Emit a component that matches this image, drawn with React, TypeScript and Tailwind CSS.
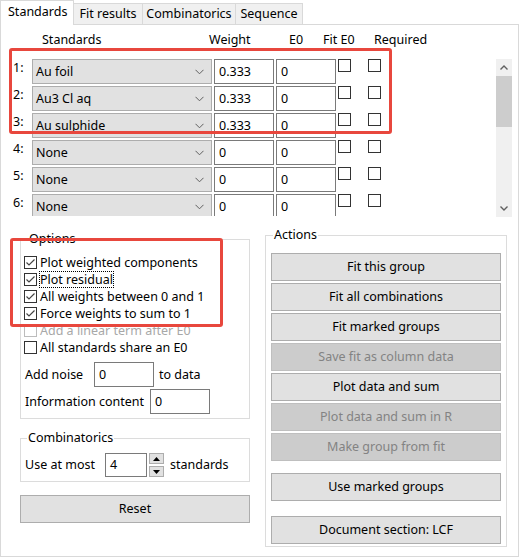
import React from "react";

function Box({ checked = false, disabled = false }: { checked?: boolean; disabled?: boolean }) {
  return (
    <div
      className={
        "w-[13px] h-[13px] shrink-0 border bg-white flex items-center justify-center " +
        (disabled ? "border-[#bcbcbc]" : "border-[#333333]")
      }
    >
      {checked && (
        <svg width="11" height="11" viewBox="0 0 11 11">
          <polyline points="1.5,5.5 4,8 9.5,2.5" fill="none" stroke="#444" strokeWidth="1.2" />
        </svg>
      )}
    </div>
  );
}

function Chevron() {
  return (
    <svg width="9" height="6" viewBox="0 0 9 6">
      <polyline points="0.5,0.8 4.5,4.8 8.5,0.8" fill="none" stroke="#606060" strokeWidth="1" />
    </svg>
  );
}

const rows = [
  { n: "1:", name: "Au foil", w: "0.333" },
  { n: "2:", name: "Au3 Cl aq", w: "0.333" },
  { n: "3:", name: "Au sulphide", w: "0.333" },
  { n: "4:", name: "None", w: "0" },
  { n: "5:", name: "None", w: "0" },
  { n: "6:", name: "None", w: "0" },
];

function Btn({ label, disabled = false, cls = "" }: { label: string; disabled?: boolean; cls?: string }) {
  return (
    <div
      className={
        "w-[230px] h-[28px] border flex items-center justify-center " +
        (disabled ? "bg-[#cccccc] border-[#bfbfbf] text-[#838383] " : "bg-[#e1e1e1] border-[#adadad] text-black ") +
        cls
      }
    >
      {label}
    </div>
  );
}

export default function App() {
  return (
    <div className="w-[521px] h-[559px] bg-white relative font-['Noto_Sans',sans-serif] text-[12.5px] leading-[16px] text-black overflow-hidden">
      {/* Tabs */}
      <div className="flex items-start h-[25px] relative z-10">
        <div className="w-[74px] h-[25px] border border-b-0 border-[#d9d9d9] bg-white flex items-start pl-[7px] pt-[3px]">
          Standards
        </div>
        <div className="mt-[3px] w-[69px] h-[21px] border-t border-r border-[#d9d9d9] bg-[#f0f0f0] flex items-center justify-center">
          Fit results
        </div>
        <div className="mt-[3px] w-[93px] h-[21px] border-t border-r border-[#d9d9d9] bg-[#f0f0f0] flex items-center justify-center">
          Combinatorics
        </div>
        <div className="mt-[3px] w-[67px] h-[21px] border-t border-r border-[#d9d9d9] bg-[#f0f0f0] flex items-center justify-center">
          Sequence
        </div>
      </div>

      {/* Panel */}
      <div className="-mt-[1px] w-[519px] h-[533px] border border-[#d9d9d9] bg-white flex flex-col">
        {/* Header */}
        <div className="mt-[7px] flex h-[16px]">
          <span className="ml-[41px] w-[167px]">Standards</span>
          <span className="w-[80px]">Weight</span>
          <span className="w-[34px]">E0</span>
          <span className="w-[51px]">Fit E0</span>
          <span>Required</span>
        </div>

        {/* Scroll area */}
        <div className="mt-[10px] flex h-[158px]">
          <div className="w-[495px] h-[158px] overflow-hidden">
            {rows.map((r) => (
              <div key={r.n} className="flex items-start h-[27px]">
                <div className="w-[31px] pl-[12px] mt-[2px]">{r.n}</div>
                <div className="mt-[1px] w-[180px] h-[25px] border border-[#adadad] bg-[#e1e1e1] flex items-center justify-between pl-[3px] pr-[7px]">
                  <span>{r.name}</span>
                  <Chevron />
                </div>
                <div className="mt-[1px] ml-[2px] w-[60px] h-[25px] border border-[#7a7a7a] bg-white flex items-center pl-[4px]">
                  {r.w}
                </div>
                <div className="mt-[1px] ml-[2px] w-[60px] h-[25px] border border-[#7a7a7a] bg-white flex items-center pl-[4px]">
                  0
                </div>
                <div className="mt-[1px] ml-[2px]">
                  <Box />
                </div>
                <div className="mt-[1px] ml-[17px]">
                  <Box />
                </div>
              </div>
            ))}
          </div>
          <div className="w-[16px] h-[158px] mt-[1px] bg-[#f0f0f0] flex flex-col">
            <div className="h-[17px] flex items-center justify-center">
              <svg width="8" height="5" viewBox="0 0 8 5">
                <polyline points="0.5,4.5 4,1 7.5,4.5" fill="none" stroke="#606060" strokeWidth="1.4" />
              </svg>
            </div>
            <div className="h-[51px] bg-[#cdcdcd]" />
            <div className="flex-1" />
            <div className="h-[17px] flex items-center justify-center">
              <svg width="8" height="5" viewBox="0 0 8 5">
                <polyline points="0.5,0.5 4,4 7.5,0.5" fill="none" stroke="#606060" strokeWidth="1.4" />
              </svg>
            </div>
          </div>
        </div>

        {/* Lower section */}
        <div className="flex items-start">
          {/* Left column */}
          <div className="ml-[19px] w-[230px] mt-[15px] flex flex-col">
            <fieldset className="border border-[#dcdcdc] pb-[4px]">
              <legend className="ml-[7px] px-[1px] leading-[16px]">Options</legend>
              <div className="pt-[7px] pl-[3px] flex flex-col">
                <div className="h-[17px] flex items-center gap-[3px]">
                  <Box checked />
                  <span>Plot weighted components</span>
                </div>
                <div className="h-[17px] flex items-center gap-[3px]">
                  <Box checked />
                  <span className="outline outline-1 outline-dotted outline-black leading-[15px]">Plot residual</span>
                </div>
                <div className="h-[17px] flex items-center gap-[3px]">
                  <Box checked />
                  <span>All weights between 0 and 1</span>
                </div>
                <div className="h-[17px] flex items-center gap-[3px]">
                  <Box checked />
                  <span>Force weights to sum to 1</span>
                </div>
                <div className="h-[17px] flex items-center gap-[3px]">
                  <Box disabled />
                  <span className="text-[#a8a8a8]">Add a linear term after E0</span>
                </div>
                <div className="h-[17px] flex items-center gap-[3px]">
                  <Box />
                  <span>All standards share an E0</span>
                </div>
              </div>
              <div className="mt-[6px] h-[25px] flex items-center pl-[4px]">
                <span className="w-[69px]">Add noise</span>
                <div className="w-[60px] h-[25px] border border-[#7a7a7a] bg-white flex items-center pl-[4px]">0</div>
                <span className="ml-[5px]">to data</span>
              </div>
              <div className="mt-[2px] h-[25px] flex items-center pl-[4px]">
                <span className="w-[125px]">Information content</span>
                <div className="w-[60px] h-[25px] border border-[#7a7a7a] bg-white flex items-center pl-[4px]">0</div>
              </div>
            </fieldset>

            <fieldset className="mt-[11px] border border-[#dcdcdc] pb-[4px]">
              <legend className="ml-[6px] px-[1px] leading-[16px]">Combinatorics</legend>
              <div className="pt-[7px] h-[31px] flex items-center pl-[4px]">
                <span className="w-[80px]">Use at most</span>
                <div className="w-[42px] h-[24px] border border-[#7a7a7a] bg-white flex items-center pl-[4px]">4</div>
                <div className="ml-[2px] w-[15px] h-[24px] flex flex-col justify-between">
                  <div className="h-[11px] border border-[#adadad] bg-[#e1e1e1] flex items-center justify-center">
                    <svg width="7" height="4" viewBox="0 0 7 4">
                      <polygon points="0,4 3.5,0 7,4" fill="#000" />
                    </svg>
                  </div>
                  <div className="h-[11px] border border-[#adadad] bg-[#e1e1e1] flex items-center justify-center">
                    <svg width="7" height="4" viewBox="0 0 7 4">
                      <polygon points="0,0 3.5,4 7,0" fill="#000" />
                    </svg>
                  </div>
                </div>
                <span className="ml-[6px]">standards</span>
              </div>
            </fieldset>

            <div className="mt-[13px]">
              <Btn label="Reset" />
            </div>
          </div>

          {/* Right column */}
          <div className="ml-[15px] w-[242px] mt-[11px]">
            <fieldset className="border border-[#dcdcdc] pb-[2px]">
              <legend className="ml-[7px] px-[1px] leading-[16px]">Actions</legend>
              <div className="pt-[10px] pl-[5px] flex flex-col gap-[2px]">
                <Btn label="Fit this group" />
                <Btn label="Fit all combinations" />
                <Btn label="Fit marked groups" />
                <Btn label="Save fit as column data" disabled />
                <Btn label="Plot data and sum" />
                <Btn label="Plot data and sum in R" disabled />
                <Btn label="Make group from fit" disabled />
                <Btn label="Use marked groups" cls="mt-[10px]" />
                <Btn label="Document section: LCF" cls="mt-[13px]" />
              </div>
            </fieldset>
          </div>
        </div>
      </div>

      {/* Red annotation boxes */}
      <div className="absolute left-[9px] top-[48px] w-[383px] h-[86px] border-[3px] border-[#e8473d] rounded-[3px] pointer-events-none" />
      <div className="absolute left-[10px] top-[238px] w-[213px] h-[89px] border-[3px] border-[#e8473d] rounded-[3px] pointer-events-none" />
    </div>
  );
}
